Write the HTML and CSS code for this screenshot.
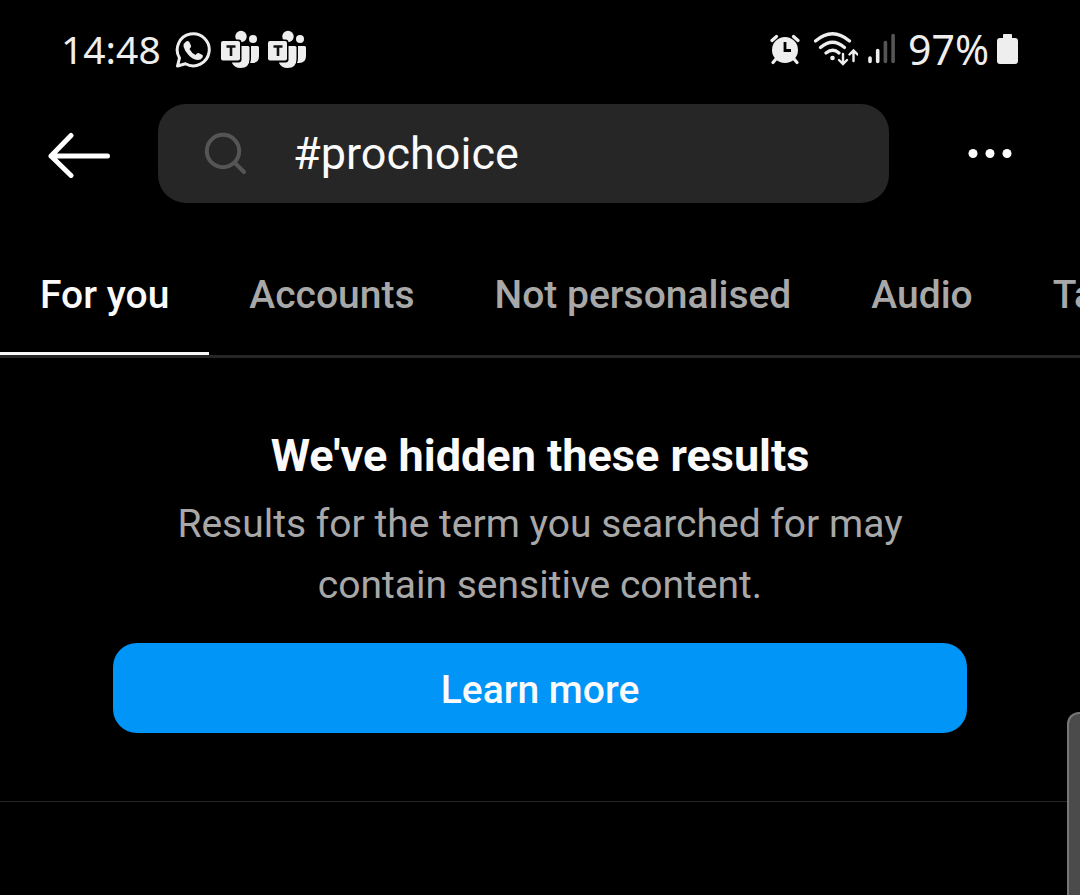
FILE: index.html
```html
<!DOCTYPE html>
<html lang="en-GB">
<head>
<meta charset="utf-8">
<meta name="viewport" content="width=device-width, initial-scale=1">
<title>Search results</title>
<link rel="stylesheet" href="styles.css">
</head>
<body>
<svg class="symbols" aria-hidden="true">
  <symbol id="teams" viewBox="0 0 40 40">
    <circle cx="21" cy="6.500" r="5.700" fill="#eee"/>
    <circle cx="33" cy="9" r="4" fill="#eee"/>
    <path d="M31 16h6.500q1.500 0 1.500 1.500V26q0 7-7 7h-2q1-2 1-5z" fill="#eee"/>
    <path d="M14 16h14q1.500 0 1.500 1.500V29q0 9-9 9-6 0-8.500-5z" fill="#eee"/>
    <rect x="-1" y="9.500" width="22.500" height="23" rx="3" fill="#000"/>
    <rect x="1" y="11" width="19" height="19.500" rx="2" fill="#eee"/>
    <path d="M6.500 16.500h9M11 16.500v9.500" stroke="#111" stroke-width="2.600" fill="none"/>
  </symbol>
</svg>
<div class="status">
  <div class="status-group">
    <time class="clock">14:48</time>
    <svg class="whatsapp" viewBox="0 0 36 40" aria-hidden="true">
      <path d="M2.500 36 4.500 28a16 16 0 1 1 6 5.800z" fill="none" stroke="#eee" stroke-width="3" stroke-linejoin="round"/>
      <path d="M11 11.500q1.500-1 3 0l2 4q.5 1.500-1.500 3.500 2 4 6 6 1.800-2.500 3-2l4 2q.8.800 0 2.500-1.500 2.500-5 2.500-5-.5-9-5t-5-8.500q0-3.500 2.500-5z" fill="#eee"/>
    </svg>
    <svg class="teams" aria-hidden="true"><use href="#teams"/></svg>
    <svg class="teams" aria-hidden="true"><use href="#teams"/></svg>
  </div>
  <div class="status-group">
    <svg class="alarm" viewBox="0 0 30 40" aria-hidden="true">
      <path d="M2 10.500 6.500 6.500M28 10.500 23.500 6.500M6 29l-3 3.500M24 29l3 3.500" stroke="#eee" stroke-width="3.200" stroke-linecap="round"/>
      <circle cx="15" cy="20" r="13" fill="#eee"/>
      <path d="M15 12v8.500h6" fill="none" stroke="#000" stroke-width="2.800"/>
    </svg>
    <svg class="wifi" viewBox="0 0 44 40" aria-hidden="true">
      <g fill="none" stroke="#eee" stroke-width="3.200" stroke-linecap="round">
        <path d="M1.500 11q17-14.500 34 0M6.500 17.500q12-10.500 24 0M12 23q7-5.500 13 0"/>
        <path d="M29 24v9.500M25 30l4 4 4-4M39.500 31v-10M35.500 24.500l4-4 4 4" stroke-width="2.400"/>
      </g>
      <circle cx="18.500" cy="28" r="2.300" fill="#eee"/>
    </svg>
    <svg class="signal" viewBox="0 0 28 40" aria-hidden="true">
      <path d="M2 28v3.500M9.700 20.500v11" stroke="#eee" stroke-width="3.600" stroke-linecap="round"/>
      <path d="M17.400 12.500v19M25.100 5.500v26" stroke="#555" stroke-width="3.600" stroke-linecap="round"/>
    </svg>
    <span class="percent">97%</span>
    <svg class="battery" viewBox="0 0 22 40" aria-hidden="true">
      <path d="M6 8V5q0-1 1-1h7q1 0 1 1v3h3q3 0 3 3v20q0 3-3 3H3q-3 0-3-3V11q0-3 3-3z" fill="#eee"/>
    </svg>
  </div>
</div>
<header class="header">
  <button class="icon-button" type="button" aria-label="Back">
    <svg class="back" viewBox="0 0 64 48"><path d="M24 5.500 4 26l20 19.500M4 26H60.500" fill="none" stroke="#fff" stroke-width="5" stroke-linecap="round" stroke-linejoin="round"/></svg>
  </button>
  <label class="search">
    <svg class="lens" viewBox="0 0 44 44" aria-hidden="true"><g fill="none" stroke="#555" stroke-width="4" stroke-linecap="round"><circle cx="19" cy="19" r="16.200"/><path d="M31 31l9 9"/></g></svg>
    <input class="search-input" type="text" value="#prochoice" aria-label="Search">
  </label>
  <button class="icon-button" type="button" aria-label="More options">
    <svg class="more" viewBox="0 0 44 12"><g fill="#fff"><circle cx="5" cy="5.500" r="4.500"/><circle cx="22" cy="5.500" r="4.500"/><circle cx="39" cy="5.500" r="4.500"/></g></svg>
  </button>
</header>
<nav class="tabs">
  <a class="tab active" href="#for-you" aria-current="page">For you</a>
  <a class="tab" href="#accounts">Accounts</a>
  <a class="tab" href="#not-personalised">Not personalised</a>
  <a class="tab" href="#audio">Audio</a>
  <a class="tab" href="#tags">Tags</a>
</nav>
<main class="notice">
  <h1 class="title">We've hidden these results</h1>
  <p class="text">Results for the term you searched for may contain sensitive content.</p>
  <button class="learn" type="button">Learn more</button>
</main>
<div class="edge-handle"></div>
</body>
</html>
```
FILE: styles.css
```css
* { box-sizing: border-box; }
body {
  margin: 0;
  min-height: 100vh;
  position: relative;
  overflow-x: hidden;
  background: #000;
  color: #fafafa;
  font-family: Roboto, "Liberation Sans", sans-serif;
}
svg { display: block; flex: none; }
button { border: 0; cursor: pointer; }
.symbols { position: absolute; width: 0; height: 0; }
.status {
  display: flex;
  justify-content: space-between;
  padding: 30px 61px 34px;
  color: #eee;
  font: 39px/40px "Noto Sans", sans-serif;
}
.status-group { display: flex; align-items: center; gap: 8px; height: 40px; }
.clock, .percent { padding-bottom: 3px; }
.clock { margin-right: 6px; }
.whatsapp { width: 36px; height: 40px; margin-right: 1px; }
.teams { width: 40px; height: 40px; }
.teams + .teams { margin-left: -1px; }
.alarm { width: 30px; height: 40px; margin-right: 6px; }
.wifi { width: 44px; height: 40px; margin-right: 2px; }
.signal { width: 28px; height: 40px; margin-right: 4px; }
.percent { font-size: 41px; }
.battery { width: 22px; height: 40px; }
.header { display: flex; align-items: center; padding: 0 68px 0 47px; }
.icon-button { padding: 0; background: none; }
.back { width: 64px; height: 48px; }
.more { width: 44px; height: 12px; }
.search {
  flex: 1;
  min-width: 0;
  display: flex;
  align-items: center;
  gap: 45px;
  height: 99px;
  margin: 0 79px 0 47px;
  padding: 0 46px;
  border-radius: 28px;
  background: #262626;
}
.lens { width: 44px; height: 44px; }
.search-input {
  flex: 1;
  min-width: 0;
  padding: 0;
  border: 0;
  outline: 0;
  background: none;
  color: #fafafa;
  font: 45px/56px Roboto, sans-serif;
}
.tabs {
  display: flex;
  margin-top: 32px;
  overflow: hidden;
  border-bottom: 3px solid #262626;
}
.tab {
  flex: none;
  padding: 36px 40px 33px;
  border-bottom: 3px solid transparent;
  color: #a8a8a8;
  font-size: 39px;
  font-weight: 500;
  line-height: 48px;
  text-decoration: none;
}
.tab.active { color: #fafafa; border-color: #fafafa; }
.notice {
  padding: 68px 113px;
  border-bottom: 1px solid #262626;
  text-align: center;
}
.title { margin: 0; font-size: 45px; font-weight: 700; line-height: 60px; }
.text {
  max-width: 760px;
  margin: 8px auto 27px;
  color: #a8a8a8;
  font-size: 39px;
  line-height: 61px;
}
.learn {
  display: block;
  width: 100%;
  padding: 23px 21px 19px;
  border-radius: 24px;
  background: #0095f6;
  color: #fafafa;
  font: 500 39px/48px Roboto, sans-serif;
}
.edge-handle {
  position: absolute;
  right: 0;
  bottom: 0;
  width: 13px;
  height: 183px;
  border: solid #777;
  border-width: 2px 0 0 2px;
  border-radius: 12px 0 0 0;
  background: #4b4b4b;
}
```
